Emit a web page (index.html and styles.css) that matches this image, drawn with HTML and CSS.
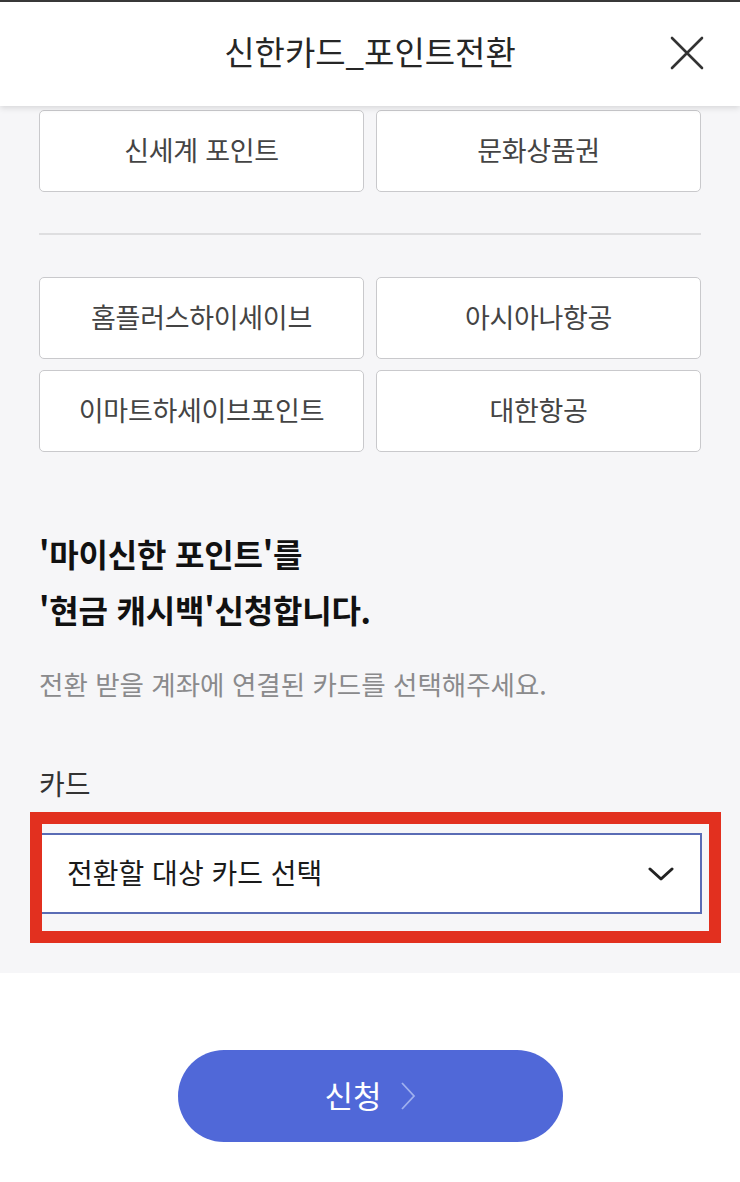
FILE: index.html
```html
<!DOCTYPE html>
<html lang="ko">
<head>
<meta charset="utf-8">
<link rel="stylesheet" href="styles.css">
</head>
<body>
<div class="page">
  <header class="header">
    <h1 class="title">신한카드_포인트전환</h1>
    <button class="close" aria-label="닫기">
      <svg width="34" height="34" viewBox="0 0 34 34"><path d="M2 2L32 32M32 2L2 32" stroke="#333" stroke-width="2.6" stroke-linecap="round" fill="none"/></svg>
    </button>
  </header>
  <main class="content">
    <div class="grid">
      <div class="opt">신세계 포인트</div>
      <div class="opt">문화상품권</div>
    </div>
    <hr class="divider">
    <div class="grid">
      <div class="opt">홈플러스하이세이브</div>
      <div class="opt">아시아나항공</div>
      <div class="opt">이마트하세이브포인트</div>
      <div class="opt">대한항공</div>
    </div>
    <h2 class="heading">'마이신한 포인트'를<br>'현금 캐시백'신청합니다.</h2>
    <p class="sub">전환 받을 계좌에 연결된 카드를 선택해주세요.</p>
    <div class="label">카드</div>
    <div class="field">
      <div class="select">
        <span>전환할 대상 카드 선택</span>
        <svg class="chev" width="26" height="16" viewBox="0 0 26 16"><path d="M2 3L13 13L24 3" stroke="#222" stroke-width="3" fill="none" stroke-linecap="round" stroke-linejoin="round"/></svg>
      </div>
      <div class="mark"></div>
    </div>
  </main>
  <footer class="footer">
    <button class="apply">신청<svg class="arrow" width="16" height="30" viewBox="0 0 16 30"><path d="M2 2L14 15L2 28" stroke="#9fb0ee" stroke-width="1.8" fill="none"/></svg></button>
  </footer>
</div>
</body>
</html>
```

FILE: styles.css
```css
* { box-sizing: border-box; }
html, body { margin: 0; padding: 0; }
body {
  font-family: "Noto Sans CJK KR", "Noto Sans", sans-serif;
  background: #ffffff;
  color: #222;
}
.page {
  width: 740px;
  min-height: 1182px;
  border-top: 2px solid #3a3a3a;
}
.header {
  position: relative;
  z-index: 2;
  height: 104px;
  background: #fff;
  box-shadow: 0 2px 6px rgba(0,0,0,0.13);
  display: flex;
  align-items: center;
  justify-content: center;
}
.title {
  margin: 0;
  font-size: 33px;
  font-weight: 400;
  color: #262626;
  line-height: 40px;
  padding-bottom: 6px;
}
.close {
  position: absolute;
  right: 36px;
  top: 34px;
  background: none;
  border: 0;
  padding: 0;
  width: 34px;
  height: 34px;
}
.close svg { display: block; }
.content {
  background: #f6f6f8;
  padding: 4px 39px 59px;
}
.grid {
  display: grid;
  grid-template-columns: 1fr 1fr;
  column-gap: 12px;
  row-gap: 11px;
}
.opt {
  height: 82px;
  background: #fff;
  border: 1.5px solid #c9c9cc;
  border-radius: 5px;
  display: flex;
  align-items: center;
  justify-content: center;
  font-size: 27px;
  color: #444;
  letter-spacing: -0.3px;
  padding-bottom: 3px;
}
.divider {
  border: 0;
  height: 2px;
  background: #dedee0;
  margin: 41px 0 42px;
}
.heading {
  margin: 73px 0 0;
  font-size: 32px;
  font-weight: 700;
  line-height: 56px;
  color: #111;
  letter-spacing: -0.2px;
}
.sub {
  margin: 30px 0 0;
  font-size: 26.5px;
  line-height: 34px;
  color: #8a8a8c;
}
.label {
  margin-top: 65px;
  font-size: 28px;
  line-height: 34px;
  color: #333;
}
.field {
  position: relative;
  margin-top: 33px;
  margin-right: -1px;
}
.select {
  height: 81px;
  background: #fff;
  border: 2.5px solid #5a6cb5;
  display: flex;
  align-items: center;
  justify-content: space-between;
  padding: 0 26px 0 26px;
  font-size: 28px;
  color: #1a1a1a;
}
.select span { padding-bottom: 4px; }
.chev { display: block; }
.mark {
  position: absolute;
  left: -9px;
  top: -21px;
  right: -19px;
  bottom: -29px;
  border: 12px solid #e2301f;
  pointer-events: none;
}
.footer {
  display: flex;
  justify-content: center;
  padding-top: 77px;
}
.apply {
  width: 385px;
  height: 92px;
  border: 0;
  border-radius: 46px;
  background: #5068d8;
  color: #fff;
  font-family: "Noto Sans CJK KR", "Noto Sans", sans-serif;
  font-size: 31px;
  display: flex;
  align-items: center;
  justify-content: center;
  gap: 18px;
  padding: 0 0 4px 0;
}
.arrow { display: block; margin-top: 4px; }
```
